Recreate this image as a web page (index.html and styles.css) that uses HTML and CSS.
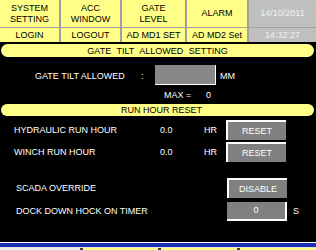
FILE: index.html
```html
<!DOCTYPE html>
<html lang="en">
<head>
  <meta charset="UTF-8" />
  <title>Gate Tilt Setting</title>
  <link rel="stylesheet" href="styles.css">
</head>
<body>

<div class="panel">
  <div class="topgrid">
    <div class="cell">SYSTEM<br>SETTING</div>
    <div class="cell">ACC<br>WINDOW</div>
    <div class="cell">GATE<br>LEVEL</div>
    <div class="cell">ALARM</div>
    <div class="cell clock">14/10/2011</div>
    <div class="cell">LOGIN</div>
    <div class="cell">LOGOUT</div>
    <div class="cell">AD MD1 SET</div>
    <div class="cell">AD MD2 Set</div>
    <div class="cell clock">14:32:27</div>
  </div>

  <div class="bar bar-first">GATE TILT ALLOWED SETTING</div>

  <div class="tilt-row">
    <span class="tilt-label">GATE TILT ALLOWED</span>
    <span class="colon">:</span>
    <span class="input-box"></span>
    <span class="unit-mm">MM</span>
  </div>
  <div class="max-row">
    <span class="max-label">MAX =</span>
    <span class="max-value">0</span>
  </div>

  <div class="bar bar-second">RUN HOUR RESET</div>

  <div class="row row-hyd">
    <span class="label">HYDRAULIC RUN HOUR</span>
    <span class="value">0.0</span>
    <span class="unit">HR</span>
    <button class="btn">RESET</button>
  </div>
  <div class="row row-winch">
    <span class="label">WINCH RUN HOUR</span>
    <span class="value">0.0</span>
    <span class="unit">HR</span>
    <button class="btn">RESET</button>
  </div>

  <div class="row row-scada">
    <span class="label wide">SCADA OVERRIDE</span>
    <button class="btn">DISABLE</button>
  </div>
  <div class="row row-dock">
    <span class="label wide">DOCK DOWN HOCK ON TIMER</span>
    <span class="btn box-in">0</span>
    <span class="unit-s">S</span>
  </div>

  <div class="footer-blue"></div>
  <div class="footer-strip">
    <span class="strip-blank"></span>
    <span class="strip-cell"></span>
    <span class="strip-cell"></span>
    <span class="strip-cell"></span>
  </div>
</div>

</body>
</html>
```

FILE: styles.css
```css
body {
  margin: 0;
  background: #000;
  font-family: "Liberation Sans", Arial, sans-serif;
  font-size: 9px;
  color: #fff;
}

.panel {
  width: 316px;
  height: 250px;
  overflow: hidden;
  display: flex;
  flex-direction: column;
}

/* top navigation grid */
.topgrid {
  display: grid;
  grid-template-columns: 59px 59px 63px 60px 1fr;
  grid-template-rows: 27px 14px;
  column-gap: 2px;
  row-gap: 1px;
  background: #a0a0a0;
  height: 42px;
}

.cell {
  background: #ffff88;
  color: #000;
  display: flex;
  align-items: center;
  justify-content: center;
  text-align: center;
  line-height: 11px;
}

.cell.clock {
  background: #c0c0c0;
  color: #f0f0f0;
}

/* yellow section bars */
.bar {
  background: #ffff88;
  color: #000;
  border-radius: 7px;
  margin: 0 2px 0 1px;
  text-align: center;
  display: flex;
  align-items: center;
  justify-content: center;
}

.bar-first {
  margin-top: 2px;
  height: 13px;
  word-spacing: 3px;
}

.bar-second {
  height: 12px;
  padding-left: 8px;
}

/* gate tilt */
.tilt-row {
  margin-top: 8px;
  height: 20px;
  display: flex;
  align-items: center;
}

.tilt-label {
  margin-left: 35px;
  width: 106px;
  padding-top: 2px;
}

.colon {
  width: 14px;
  padding-top: 2px;
}

.input-box {
  box-sizing: border-box;
  width: 61px;
  height: 20px;
  background: #888;
  border-right: 1px solid #fff;
  border-bottom: 1px solid #fff;
}

.unit-mm {
  margin-left: 4px;
  padding-top: 2px;
}

.max-row {
  height: 19px;
  display: flex;
  align-items: center;
}

.max-label {
  margin-left: 164px;
  width: 42px;
}

/* rows with buttons */
.row {
  height: 20px;
  display: flex;
  align-items: center;
}

.row-hyd { margin-top: 4px; }
.row-winch { margin-top: 2px; }
.row-scada { margin-top: 16px; }
.row-dock { margin-top: 3px; }

.label {
  margin-left: 14px;
  width: 146px;
}

.label.wide {
  margin-left: 16px;
  width: 211px;
}

.value {
  width: 44px;
}

.unit {
  width: 22px;
}

.btn {
  box-sizing: border-box;
  width: 60px;
  height: 20px;
  background: #808080;
  color: #fff;
  font-family: inherit;
  font-size: 9px;
  border: none;
  border-top: 2px solid #fff;
  border-left: 2px solid #fff;
  padding: 0;
  display: flex;
  align-items: center;
  justify-content: center;
}

.box-in {
  border-top: none;
  border-left: none;
  border-right: 2px solid #fff;
  border-bottom: 2px solid #fff;
  height: 19px;
}

.unit-s {
  margin-left: 6px;
}

/* bottom edge of the next window */
.footer-blue {
  margin-top: auto;
  height: 4px;
  border-top: 1px solid #fff;
  border-bottom: 1px solid #e0e0e0;
  background: #1a2fb0;
}

.footer-strip {
  height: 2px;
  display: flex;
  background: #f0f0f0;
}

.strip-blank {
  width: 80px;
}

.strip-cell {
  width: 76px;
  background: #ffff88;
  border-left: 3px solid #404040;
}
```
